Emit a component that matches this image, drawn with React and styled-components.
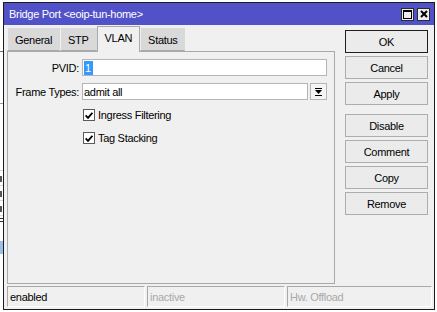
import React from "react";
import styled, { createGlobalStyle } from "styled-components";

const GlobalStyle = createGlobalStyle`
  html, body {
    margin: 0;
    padding: 0;
    background: #ffffff;
  }
  body {
    font-family: "Liberation Sans", Arial, sans-serif;
    font-size: 11px;
    letter-spacing: -0.3px;
    color: #000;
  }
`;

const TABS = ["General", "STP", "VLAN", "Status"];
const ACTIONS = [
  ["OK", "Cancel", "Apply"],
  ["Disable", "Comment", "Copy", "Remove"],
];

// bits of the window behind this one, peeking out at the left edge
const BACK_BITS = [
  { h: 51, c: "#ffffff" },
  { h: 1, c: "#6d6d6d" },
  { h: 51, c: "#ffffff" },
  { h: 1, c: "#9a9a9a" },
  { h: 66, c: "#ffffff" },
  { h: 1, c: "#d6d6d6" },
  { h: 5, c: "#ffffff" },
  { h: 6, c: "#555555", w: 2 },
  { h: 3, c: "#ffffff" },
  { h: 1, c: "#d6d6d6" },
  { h: 5, c: "#ffffff" },
  { h: 6, c: "#555555", w: 2 },
  { h: 3, c: "#ffffff" },
  { h: 1, c: "#d6d6d6" },
  { h: 5, c: "#ffffff" },
  { h: 6, c: "#555555", w: 2 },
  { h: 3, c: "#ffffff" },
  { h: 1, c: "#d6d6d6" },
  { h: 2, c: "#ffffff" },
  { h: 1, c: "#333333" },
  { h: 2, c: "#ffffff" },
  { h: 1, c: "#333333" },
  { h: 19, c: "#ffffff" },
  { h: 13, c: "#9cbfe8" },
  { h: 60, c: "#ffffff" },
];

const Check = () => (
  <svg width="8" height="7" viewBox="0 0 8 7">
    <path d="M0.6 3.4 L3 5.9 L7.4 0.8" fill="none" stroke="#000" strokeWidth="1.8" />
  </svg>
);

const App = () => {
  return (
    <>
      <GlobalStyle />
      <Page>
        <BackStrip>
          {BACK_BITS.map((b, i) => (
            <BackBit key={i} $h={b.h} $c={b.c} $w={b.w} />
          ))}
        </BackStrip>

        <Window>
          {/* Title bar */}
          <TitleBar>
            <TitleText>Bridge Port &lt;eoip-tun-home&gt;</TitleText>
            <TitleButtons>
              <TitleBtn>
                <svg width="9" height="9" viewBox="0 0 9 9">
                  <rect x="0.5" y="0.5" width="8" height="8" fill="none" stroke="#000" />
                  <rect x="0" y="0" width="9" height="2" fill="#000" />
                </svg>
              </TitleBtn>
              <TitleBtn>
                <svg width="8" height="8" viewBox="0 0 8 8">
                  <path d="M1 1 L7 7 M7 1 L1 7" stroke="#000" strokeWidth="2" />
                </svg>
              </TitleBtn>
            </TitleButtons>
          </TitleBar>

          <Body>
            <Main>
              <LeftCol>
                {/* Tabs */}
                <Tabs>
                  {TABS.map((t) => (
                    <Tab key={t} $active={t === "VLAN"}>
                      {t}
                    </Tab>
                  ))}
                </Tabs>

                {/* VLAN page */}
                <Panel>
                  <Form>
                    <Label>PVID:</Label>
                    <TextBox>
                      <Selected>1</Selected>
                    </TextBox>

                    <Label>Frame Types:</Label>
                    <Combo>
                      <TextBox>admit all</TextBox>
                      <DropBtn>
                        <svg width="7" height="8" viewBox="0 0 7 8">
                          <rect x="0" y="0" width="7" height="1" fill="#000" />
                          <path d="M0 2 H7 L3.5 6 Z" fill="#000" />
                          <rect x="0" y="7" width="7" height="1" fill="#000" />
                        </svg>
                      </DropBtn>
                    </Combo>

                    <Spacer />
                    <CheckRow>
                      <CheckBox>
                        <Check />
                      </CheckBox>
                      <span>Ingress Filtering</span>
                    </CheckRow>

                    <Spacer />
                    <CheckRow>
                      <CheckBox>
                        <Check />
                      </CheckBox>
                      <span>Tag Stacking</span>
                    </CheckRow>
                  </Form>
                </Panel>
              </LeftCol>

              {/* Buttons */}
              <RightCol>
                {ACTIONS.map((group, gi) => (
                  <ButtonGroup key={gi}>
                    {group.map((label) => (
                      <ActionButton key={label} $default={label === "OK"}>
                        {label}
                      </ActionButton>
                    ))}
                  </ButtonGroup>
                ))}
              </RightCol>
            </Main>

            {/* Status bar */}
            <StatusBar>
              <StatusCell>enabled</StatusCell>
              <StatusCell $dim>inactive</StatusCell>
              <StatusCell $dim>Hw. Offload</StatusCell>
            </StatusBar>
          </Body>
        </Window>
      </Page>
    </>
  );
};

const Page = styled.div`
  display: flex;
  width: 437px;
  height: 312px;
  overflow: hidden;
  background: #ffffff;
`;

const BackStrip = styled.div`
  display: flex;
  flex-direction: column;
  width: 3px;
  flex-shrink: 0;
`;

const BackBit = styled.div`
  width: ${(p) => (p.$w ? `${p.$w}px` : "100%")};
  height: ${(p) => p.$h}px;
  flex-shrink: 0;
  background: ${(p) => p.$c};
`;

const Window = styled.div`
  box-sizing: border-box;
  display: flex;
  flex-direction: column;
  width: 432px;
  height: 308px;
  margin-top: 2px;
  border: 1px solid #1c1c1c;
  background: #f0f0f0;
  flex-shrink: 0;
`;

const TitleBar = styled.div`
  display: flex;
  align-items: center;
  justify-content: space-between;
  height: 22px;
  padding: 0 4px 0 5px;
  background: #5252c8;
  color: #ffffff;
  flex-shrink: 0;
`;

const TitleText = styled.span`
  white-space: nowrap;
`;

const TitleButtons = styled.div`
  display: flex;
  gap: 3px;
`;

const TitleBtn = styled.div`
  box-sizing: border-box;
  display: flex;
  align-items: center;
  justify-content: center;
  width: 13px;
  height: 13px;
  border: 1px solid #2a2a2a;
  background: #ececec;
`;

const Body = styled.div`
  display: flex;
  flex-direction: column;
  flex: 1;
  padding: 1px 2px 2px 3px;
`;

const Main = styled.div`
  display: flex;
  flex: 1;
`;

const LeftCol = styled.div`
  display: flex;
  flex-direction: column;
  width: 328px;
`;

const Tabs = styled.div`
  display: flex;
  align-items: flex-end;
  height: 25px;
  position: relative;
  z-index: 1;
`;

const Tab = styled.div`
  box-sizing: border-box;
  display: flex;
  align-items: center;
  height: ${(p) => (p.$active ? 26 : 23)}px;
  margin-bottom: ${(p) => (p.$active ? -1 : 0)}px;
  padding: ${(p) => (p.$active ? "0 7px 3px" : "0 7px")};
  background: ${(p) => (p.$active ? "#f0f0f0" : "#d9d9d9")};
  border: 1px solid ${(p) => (p.$active ? "#a9a9a9" : "#d9d9d9")};
  border-bottom: ${(p) => (p.$active ? "none" : "1px solid #a9a9a9")};
  border-left-color: ${(p) => (p.$active ? "#a9a9a9" : "#f0f0f0")};
`;

const Panel = styled.div`
  box-sizing: border-box;
  flex: 1;
  border: 1px solid #a9a9a9;
  padding: 7px 7px 0 0;
`;

const Form = styled.div`
  display: grid;
  grid-template-columns: 71px 1fr;
  column-gap: 3px;
  row-gap: 7px;
  align-items: center;
`;

const Label = styled.div`
  text-align: right;
  white-space: nowrap;
`;

const TextBox = styled.div`
  box-sizing: border-box;
  display: flex;
  align-items: center;
  height: 17px;
  padding-left: 1px;
  border: 1px solid #b5b5b5;
  background: #ffffff;
  white-space: nowrap;
`;

const Selected = styled.span`
  display: inline-flex;
  align-items: center;
  height: 14px;
  padding: 0 2px 0 1px;
  background: #3399ff;
  color: #ffffff;
`;

const Combo = styled.div`
  display: grid;
  grid-template-columns: 1fr 17px;
  column-gap: 2px;
`;

const DropBtn = styled.div`
  box-sizing: border-box;
  display: flex;
  align-items: center;
  justify-content: center;
  height: 17px;
  border: 1px solid #b5b5b5;
  background: #f4f4f4;
`;

const Spacer = styled.div``;

const CheckRow = styled.div`
  display: flex;
  align-items: center;
  gap: 3px;
  height: 16px;
  padding-left: 1px;
  white-space: nowrap;
`;

const CheckBox = styled.div`
  box-sizing: border-box;
  display: flex;
  align-items: center;
  justify-content: center;
  width: 12px;
  height: 12px;
  border: 1px solid #5a5a5a;
  background: #ffffff;
`;

const RightCol = styled.div`
  display: flex;
  flex-direction: column;
  gap: 9px;
  width: 83px;
  margin-left: 10px;
  padding-top: 4px;
`;

const ButtonGroup = styled.div`
  display: flex;
  flex-direction: column;
  gap: 3px;
`;

const ActionButton = styled.div`
  box-sizing: border-box;
  display: flex;
  align-items: center;
  justify-content: center;
  height: 23px;
  border: 1px solid ${(p) => (p.$default ? "#1e1e1e" : "#adadad")};
  background: #ebebeb;
`;

const StatusBar = styled.div`
  display: grid;
  grid-template-columns: 138px 138px 1fr;
  column-gap: 2px;
  height: 21px;
  margin-top: 2px;
`;

const StatusCell = styled.div`
  box-sizing: border-box;
  display: flex;
  align-items: center;
  padding-left: 2px;
  border: 1px solid;
  border-color: #a9a9a9 #ffffff #ffffff #a9a9a9;
  color: ${(p) => (p.$dim ? "#a9a9a9" : "#000000")};
  white-space: nowrap;
`;

export default App;
